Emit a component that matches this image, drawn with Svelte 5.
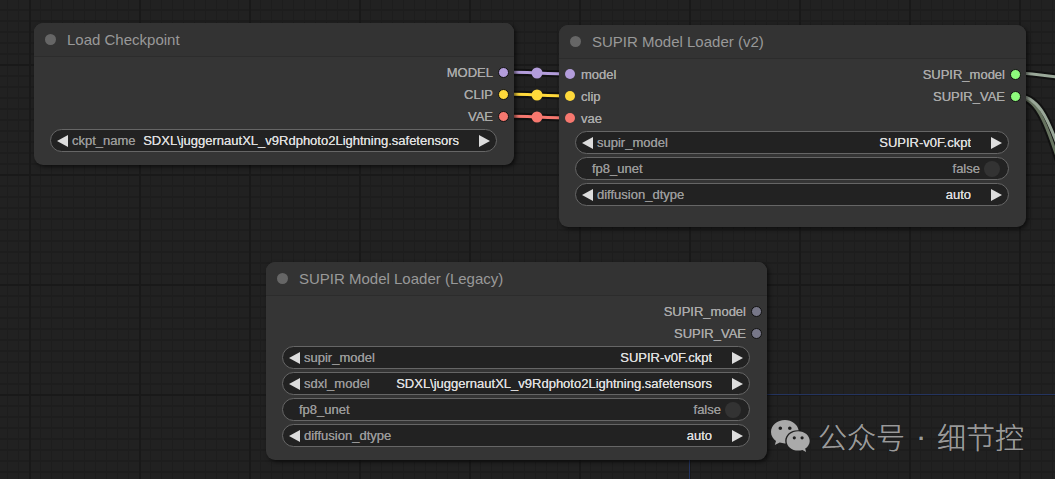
<!-- Node graph canvas: checkpoint and SUPIR loader nodes with their links -->
<script lang="ts">
	interface Slot {
		name: string;
		color: string;
	}

	interface Widget {
		kind: 'combo' | 'toggle';
		name: string;
		value: string;
	}

	interface GraphNode {
		id: string;
		title: string;
		x: number;
		y: number;
		width: number;
		height: number;
		inputs: Slot[];
		outputs: Slot[];
		widgets: Widget[];
	}

	const SDXL = 'SDXL\\juggernautXL_v9Rdphoto2Lightning.safetensors';

	let nodes: GraphNode[] = $state([
		{
			id: 'checkpoint',
			title: 'Load Checkpoint',
			x: 34,
			y: 23,
			width: 480,
			height: 142,
			inputs: [],
			outputs: [
				{ name: 'MODEL', color: '#b39ddb' },
				{ name: 'CLIP', color: '#ffd93b' },
				{ name: 'VAE', color: '#f7786f' }
			],
			widgets: [{ kind: 'combo', name: 'ckpt_name', value: SDXL }]
		},
		{
			id: 'supir-v2',
			title: 'SUPIR Model Loader (v2)',
			x: 559,
			y: 25,
			width: 467,
			height: 202,
			inputs: [
				{ name: 'model', color: '#b39ddb' },
				{ name: 'clip', color: '#ffd93b' },
				{ name: 'vae', color: '#f7786f' }
			],
			outputs: [
				{ name: 'SUPIR_model', color: '#8dfb7c' },
				{ name: 'SUPIR_VAE', color: '#8dfb7c' }
			],
			widgets: [
				{ kind: 'combo', name: 'supir_model', value: 'SUPIR-v0F.ckpt' },
				{ kind: 'toggle', name: 'fp8_unet', value: 'false' },
				{ kind: 'combo', name: 'diffusion_dtype', value: 'auto' }
			]
		},
		{
			id: 'supir-legacy',
			title: 'SUPIR Model Loader (Legacy)',
			x: 266,
			y: 262,
			width: 501,
			height: 198,
			inputs: [],
			outputs: [
				{ name: 'SUPIR_model', color: '#777788' },
				{ name: 'SUPIR_VAE', color: '#777788' }
			],
			widgets: [
				{ kind: 'combo', name: 'supir_model', value: 'SUPIR-v0F.ckpt' },
				{ kind: 'combo', name: 'sdxl_model', value: SDXL },
				{ kind: 'toggle', name: 'fp8_unet', value: 'false' },
				{ kind: 'combo', name: 'diffusion_dtype', value: 'auto' }
			]
		}
	]);

	const links = [
		{ d: 'M503 72C520 72 553 74 570 74', color: '#b39ddb', mid: [537, 73] },
		{ d: 'M503 94C520 94 553 96 570 96', color: '#ffd93b', mid: [537, 95] },
		{ d: 'M503 116C520 116 553 118 570 118', color: '#f7786f', mid: [537, 117] },
		{ d: 'M1015 73C1030 73 1044 75 1070 79', color: '#9aa899', mid: null },
		{ d: 'M1015 96C1036 97 1045 118 1060 166', color: '#66735f', mid: null },
		{ d: 'M1015 95C1038 96 1047 114 1063 160', color: '#9aa899', mid: null }
	];
</script>

<main class="graph">
	<svg class="links" aria-hidden="true">
		<path class="axis" d="M689.500 394.500H4000M689.500 394.500V4000" />
		{#each links as link}
			<path class="link-edge" d={link.d} />
		{/each}
		{#each links as link}
			<path class="link" d={link.d} stroke={link.color} />
			{#if link.mid}
				<circle cx={link.mid[0]} cy={link.mid[1]} r="5.500" fill={link.color} />
			{/if}
		{/each}
	</svg>

	{#each nodes as node (node.id)}
		<section
			class="node"
			style="left: {node.x}px; top: {node.y}px; width: {node.width}px; min-height: {node.height}px"
		>
			<header class="node__header">
				<span class="node__dot"></span>
				<h2 class="node__title">{node.title}</h2>
			</header>

			<div class="slots">
				<ul class="slots__list">
					{#each node.inputs as slot}
						<li class="slot">
							<span class="slot__dot" style="background: {slot.color}"></span>
							<span>{slot.name}</span>
						</li>
					{/each}
				</ul>
				<ul class="slots__list">
					{#each node.outputs as slot}
						<li class="slot slot--out">
							<span>{slot.name}</span>
							<span class="slot__dot slot__dot--out" style="background: {slot.color}"></span>
						</li>
					{/each}
				</ul>
			</div>

			<div class="widgets">
				{#each node.widgets as widget}
					{@const id = `${node.id}-${widget.name}`}
					{#if widget.kind === 'combo'}
						<div class="widget">
							<button type="button" class="arrow" aria-label="Previous {widget.name}">
								<svg width="11" height="12" viewBox="0 0 11 12"><path d="M11 0v12L0 6z" /></svg>
							</button>
							<label for={id}>{widget.name}</label>
							<select {id} class="widget__value" bind:value={widget.value}>
								<option value={widget.value}>{widget.value}</option>
							</select>
							<button type="button" class="arrow" aria-label="Next {widget.name}">
								<svg width="11" height="12" viewBox="0 0 11 12"><path d="M0 0v12l11-6z" /></svg>
							</button>
						</div>
					{:else}
						<div class="widget widget--toggle">
							<label for={id}>{widget.name}</label>
							<span class="widget__state">{widget.value}</span>
							<input
								{id}
								type="checkbox"
								checked={widget.value === 'true'}
								onchange={(e) => (widget.value = String(e.currentTarget.checked))}
							/>
						</div>
					{/if}
				{/each}
			</div>
		</section>
	{/each}

	<div class="watermark">
		<svg width="39" height="32" viewBox="0 0 39 32" aria-hidden="true">
			<path
				fill-rule="evenodd"
				d="M14 0C6.200 0 0 5.200 0 11.900c0 3.700 2 6.900 5 9.100L3.800 25l4.900-2.400c1.900.6 3.900.9 5.900.8-.3-.9-.4-1.700-.4-2.600 0-5.900 5.400-10.600 12.400-10.600h1C26.500 4.300 20.800 0 14 0zM9.300 6.400a1.800 1.800 0 1 1 0 3.600 1.800 1.800 0 0 1 0-3.600zm9.500 0a1.800 1.800 0 1 1 0 3.600 1.800 1.800 0 0 1 0-3.600z"
			/>
			<path
				fill-rule="evenodd"
				d="M27.200 11.200c-6.500 0-11.600 4.300-11.600 9.700s5.100 9.700 11.600 9.700c1.500 0 2.900-.2 4.200-.6l3.700 2-.9-3.400c2.700-1.800 4.500-4.500 4.500-7.700 0-5.400-5.100-9.700-11.500-9.700zm-3.900 5a1.600 1.600 0 1 1 0 3.200 1.600 1.600 0 0 1 0-3.200zm7.800 0a1.600 1.600 0 1 1 0 3.200 1.600 1.600 0 0 1 0-3.200z"
			/>
		</svg>
		<span>公众号</span>
		<span class="watermark__sep">·</span>
		<span>细节控</span>
	</div>
</main>

<style>
	:global(body) {
		margin: 0;
		background: #212121;
	}

	.graph {
		position: relative;
		min-height: 100vh;
		overflow: hidden;
		font-family: 'Liberation Sans', Arial, sans-serif;
		font-size: 13px;
		color: #aaa;
		background-color: #212121;
		/* major lines every 110px, minor every 11px */
		background-image:
			linear-gradient(90deg, #191919 2px, transparent 2px),
			linear-gradient(#191919 2px, transparent 2px),
			linear-gradient(90deg, #1d1d1d 1px, transparent 1px),
			linear-gradient(#1d1d1d 2px, transparent 2px);
		background-size: 110px 110px, 110px 110px, 11px 11px, 11px 11px;
		background-position: 29px 0, 0 64px, 7px 0, 0 9px;
	}

	.links {
		position: absolute;
		inset: 0;
		width: 100%;
		height: 100%;
		fill: none;
	}

	.axis {
		stroke: #24345f;
	}

	.link-edge {
		stroke: #111;
		stroke-width: 7;
	}

	.link {
		stroke-width: 3;
	}

	.node {
		position: absolute;
		box-sizing: border-box;
		border-radius: 9px;
		background: #353535;
		box-shadow: 2px 2px 4px rgba(0, 0, 0, 0.6);
	}

	.node__header {
		display: flex;
		align-items: center;
		gap: 11px;
		box-sizing: border-box;
		height: 34px;
		padding: 0 11px;
		border-bottom: 1px solid #2c2c2c;
		border-radius: 9px 9px 0 0;
		background: #333;
	}

	.node__dot {
		width: 11px;
		height: 11px;
		border-radius: 50%;
		background: #666;
	}

	.node__title {
		margin: 0;
		font-size: 15px;
		font-weight: 400;
		color: #999;
	}

	.slots {
		display: flex;
		justify-content: space-between;
		padding: 4px 5px 2px 6px;
	}

	.slots__list {
		margin: 0;
		padding: 0;
		list-style: none;
	}

	.slot {
		display: flex;
		align-items: center;
		gap: 6px;
		height: 22px;
		text-shadow: 0 0 0 currentColor;
	}

	.slot--out {
		justify-content: flex-end;
		gap: 5px;
	}

	.slot__dot {
		box-sizing: border-box;
		width: 10px;
		height: 10px;
		border-radius: 50%;
	}

	.slot__dot--out {
		width: 11px;
		height: 11px;
		border: 1px solid #111;
	}

	.widgets {
		display: flex;
		flex-direction: column;
		gap: 3px;
		padding: 0 17px 0 16px;
	}

	.widget {
		display: flex;
		align-items: center;
		gap: 4px;
		box-sizing: border-box;
		height: 23px;
		padding: 0 6px;
		border: 1px solid #666;
		border-radius: 12px;
		background: #222;
		color: #999;
		text-shadow: 0 0 0 currentColor;
	}

	.widget--toggle {
		padding: 0 8px 0 16px;
	}

	.widget__value {
		flex: 1;
		min-width: 0;
		margin-right: 16px;
		padding: 0;
		border: 0;
		outline: none;
		appearance: none;
		background: transparent;
		color: #ddd;
		font: inherit;
		text-align-last: right;
		text-shadow: 0 0 0 currentColor;
	}

	.widget__state {
		margin-left: auto;
	}

	.arrow {
		display: flex;
		padding: 0;
		border: 0;
		background: none;
		fill: #ddd;
		cursor: pointer;
	}

	input[type='checkbox'] {
		width: 16px;
		height: 16px;
		margin: 0;
		border-radius: 50%;
		appearance: none;
		background: #333;
	}

	input[type='checkbox']:checked {
		background: #89a;
	}

	.watermark {
		position: absolute;
		left: 771px;
		top: 416px;
		display: flex;
		align-items: center;
		gap: 8px;
		font-family: 'Noto Sans CJK SC', sans-serif;
		font-size: 29px;
		font-weight: 300;
		line-height: 40px;
		white-space: nowrap;
		color: #999;
		text-shadow: 0 0 0 currentColor;
		fill: #aaa;
	}

	.watermark__sep {
		width: 16px;
		font-family: 'Liberation Sans', sans-serif;
		text-align: center;
	}
</style>
